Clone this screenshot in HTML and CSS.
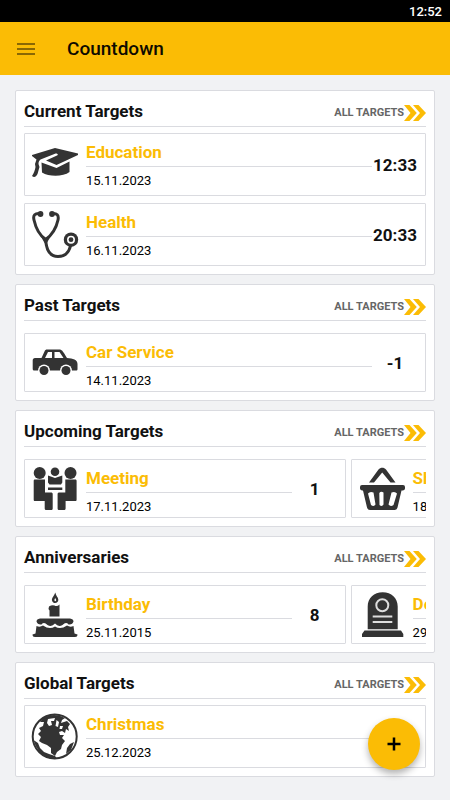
FILE: index.html
```html
<!DOCTYPE html>
<html lang="en">
<head>
<meta charset="utf-8">
<meta name="viewport" content="width=device-width, initial-scale=1">
<title>Countdown</title>
<link rel="stylesheet" href="styles.css">
</head>
<body>
<svg class="defs" aria-hidden="true">
  <symbol id="more" viewBox="0 0 22 16">
    <path d="M0 0H5.500L12.800 8L5.500 16H0L6.500 8ZM9 0H14.500L22 8L14.500 16H9L16 8Z"/>
  </symbol>
</svg>

<div class="status">12:52</div>
<header class="appbar">
  <button class="menu" type="button" aria-label="Menu">
    <svg width="18" height="14" viewBox="0 0 18 14"><path d="M0 2H18M0 7H18M0 12H18"/></svg>
  </button>
  <h1>Countdown</h1>
</header>

<main class="content">
  <section class="card">
    <div class="card-head"><h2>Current Targets</h2><a class="all" href="#current">ALL TARGETS<svg><use href="#more"/></svg></a></div>
    <div class="list" id="current">
      <article class="item">
        <svg class="icon" viewBox="0 0 48 48">
          <path d="M24 7L47 12.500V14L25.500 24L15 19.500L26 14.500C28 13.500 26 12 24 12.700L9.500 18.500C8 20 7.500 21 7.500 23L8.500 26L6.500 33C5 36 3 37 1 35C3 32 4 29 4.500 26L4 23L5.500 18.500L1 15V14Z"/>
          <path d="M10.500 21.500L25.500 27L38.500 20.500V31C32 36 18 36 11 31.500Z"/>
        </svg>
        <div class="info"><h3>Education</h3><time>15.11.2023</time></div>
        <strong class="count">12:33</strong>
      </article>
      <article class="item">
        <svg class="icon" viewBox="0 0 48 48">
          <path class="line tube" d="M9 2.500C4 2 1.800 4 3 9C5 18 8 24 14.700 28.500C21 24 25 18 27 9C28 4 26 2 21 2.500M14.700 28C15 36 17 45.500 27 45.500C34 45.500 38 41 39.500 35"/>
          <circle cx="9.500" cy="3" r="2.900"/><circle cx="21" cy="3" r="2.900"/>
          <path d="M8.500 23L14.700 34L21 23L14.700 27Z"/>
          <circle cx="40" cy="28.700" r="7.200"/><circle class="hole" cx="40" cy="28.700" r="4"/><circle cx="40" cy="28.700" r="2.400"/>
        </svg>
        <div class="info"><h3>Health</h3><time>16.11.2023</time></div>
        <strong class="count">20:33</strong>
      </article>
    </div>
  </section>

  <section class="card">
    <div class="card-head"><h2>Past Targets</h2><a class="all" href="#past">ALL TARGETS<svg><use href="#more"/></svg></a></div>
    <div class="list short" id="past">
      <article class="item">
        <svg class="icon" viewBox="0 0 48 48">
          <path d="M16 10.500H29C31 10.500 33 14 36 19C42 19.500 46.500 20.500 46.500 25V30C46.500 31 46 31.500 45 31.500H3.500C2 31.500 1.700 31 1.700 29.500V21.500C1.700 20 2.500 19 4 19H10.500L13.500 12.500C14 11 15 10.500 16 10.500Z"/>
          <path class="hole" d="M17 13H21V19H14ZM23.500 13H28.500L32.500 19H23.500Z"/>
          <circle class="hole" cx="13" cy="31.500" r="6"/><circle class="hole" cx="35" cy="31.500" r="6"/>
          <circle cx="13" cy="31.500" r="4.500"/><circle cx="35" cy="31.500" r="4.500"/>
        </svg>
        <div class="info"><h3>Car Service</h3><time>14.11.2023</time></div>
        <strong class="count">-1</strong>
      </article>
    </div>
  </section>

  <section class="card">
    <div class="card-head"><h2>Upcoming Targets</h2><a class="all" href="#upcoming">ALL TARGETS<svg><use href="#more"/></svg></a></div>
    <div class="list short carousel" id="upcoming">
      <article class="item">
        <svg class="icon" viewBox="0 0 48 48">
          <circle cx="8.700" cy="8" r="6"/><circle cx="39.500" cy="8" r="6"/><circle cx="24" cy="6.700" r="4.300"/>
          <path d="M4 14.500H14V27.500H20C21 27.500 21.700 28 21.700 29V43.500C21.700 44.500 21 45 20 45H15.500C14.500 45 13.700 44.500 13.700 43.500V36H4C3 36 2.700 35.500 2.700 34.500V16C2.700 15 3 14.500 4 14.500Z"/>
          <path d="M44.300 14.500H34.300V27.500H28.300C27.300 27.500 26.600 28 26.600 29V43.500C26.600 44.500 27.300 45 28.300 45H32.800C33.800 45 34.600 44.500 34.600 43.500V36H44.300C45.300 36 45.600 35.500 45.600 34.500V16C45.600 15 45.300 14.500 44.300 14.500Z"/>
          <path d="M17 10.500L24 13L31.300 10.500V17.500L30 19.500H18.500L17 17.500ZM17 22.500H31.300V25H17Z"/>
        </svg>
        <div class="info"><h3>Meeting</h3><time>17.11.2023</time></div>
        <strong class="count">1</strong>
      </article>
      <article class="item">
        <svg class="icon" viewBox="0 0 48 48">
          <path d="M11 17.500L20.500 4.500C22.500 2.300 26 2.300 28 4.500L37.500 17.500H32.500L24.200 7.500L16 17.500Z"/>
          <path d="M4 20H45Q47 20 47 22V23.500Q47 25 45 25.500H43.500L39.500 42.500Q39 45 36.500 45H12Q9.500 45 9 42.500L5 25.500H4Q2 25 2 23.500V22Q2 20 4 20Z"/>
          <path class="hole" d="M10 28.500Q12 26 15.500 27.500L17.500 39.500Q16 42 13 40ZM21.300 28Q23 26 25.500 27.500L25.500 39.500Q24 42 21.500 40ZM39 28.500Q37 26 33.500 27.500L30.500 39.500Q32.500 42 35.500 40Z"/>
        </svg>
        <div class="info"><h3>Shopping</h3><time>18.11.2023</time></div>
        <strong class="count">2</strong>
      </article>
    </div>
  </section>

  <section class="card">
    <div class="card-head"><h2>Anniversaries</h2><a class="all" href="#anniversaries">ALL TARGETS<svg><use href="#more"/></svg></a></div>
    <div class="list short carousel" id="anniversaries">
      <article class="item">
        <svg class="icon" viewBox="0 0 48 48">
          <path d="M24.300 1.500C23 5 20.500 7 21 9.500C21.500 11.500 23 12 24 12C26 12 27.500 10.500 27.300 8.500C27 6 25 5 24.300 1.500Z"/>
          <path class="hole" d="M24.200 7C23 9 23.300 10 24.300 10.200C25.500 9.800 25.500 9 24.200 7Z"/>
          <path d="M18 15.500Q21 13.500 23.500 14.500Q26 16 28.500 13.500V25.500H18.500V19.500L17.500 18Z"/>
          <path d="M9 27.500H39Q42.500 28 42.500 30.500Q41.500 34 37.500 33.500Q35 30.500 31.500 34Q27.500 36.500 24 32.500Q20.500 36.500 16.500 34Q13 30.500 10.500 33.500Q6.500 34 5.500 30.500Q5.500 28 9 27.500Z"/>
          <path d="M5.500 35Q9 36.500 12 34.500Q18.500 39 24 35.500Q29.500 39 36 34.500Q39 36.500 42.500 35L43.500 42.500L46.500 43.500Q46.500 46 44 46H4Q1.500 46 1.500 43.500L4.500 42.500Z"/>
        </svg>
        <div class="info"><h3>Birthday</h3><time>25.11.2015</time></div>
        <strong class="count">8</strong>
      </article>
      <article class="item">
        <svg class="icon" viewBox="0 0 48 48">
          <path d="M9.700 38.300V15.500C9.700 7 16 1.300 24.700 1.300S39.700 7 39.700 15.500V38.300ZM6.500 39.500H43L45.300 43V46H4V43Z"/>
          <circle class="engraving" cx="24.300" cy="14.300" r="6"/>
          <path class="engraving" d="M14.700 25.500H34.300M14.700 31H34.300"/>
        </svg>
        <div class="info"><h3>Death</h3><time>29.11.2010</time></div>
        <strong class="count">12</strong>
      </article>
    </div>
  </section>

  <section class="card">
    <div class="card-head"><h2>Global Targets</h2><a class="all" href="#global">ALL TARGETS<svg><use href="#more"/></svg></a></div>
    <div class="list" id="global">
      <article class="item">
        <svg class="icon" viewBox="0 0 48 48">
          <circle class="line" cx="23.700" cy="23.500" r="22"/>
          <path d="M12 5Q23 -1 34 5L31 7L30 10L33 9L36 8L39 11L37 14L38 18L35 16L34 20L31 18L28 19L29 22L33 22L31 25L34 28L31 32L30 36L26 39L24 43L20 40V35L16 32L11 30L8 28L10 24L7 21L10 18L8 15L12 13L13 9L9 9Z"/>
          <path class="hole" d="M17 6L24 5L23 8L20 8L21 12L18 13L16 10ZM25.500 7L28 9L27 14L24.500 13ZM29 13L32 13L31 16L28.500 16Z"/>
          <path d="M2.500 27L7 30L9 35L13 39L18 41L24 43L26 45.500L19 45.500Q6 41 2.500 27ZM39 31L43 29L40 37L35 41L36 35Z"/>
        </svg>
        <div class="info"><h3>Christmas</h3><time>25.12.2023</time></div>
      </article>
    </div>
  </section>
</main>

<button class="fab" type="button" aria-label="Add target">
  <svg width="14" height="14" viewBox="0 0 14 14"><path d="M7 .5V13.500M.5 7H13.500"/></svg>
</button>
</body>
</html>
```

FILE: styles.css
```css
* { box-sizing: border-box; }

body {
  margin: 0;
  min-height: 100vh;
  background: #f1f2f4;
  color: #111;
  font-family: Roboto, "Liberation Sans", sans-serif;
}

h1, h2, h3 { margin: 0; font-weight: 700; }

.defs { display: none; }

.status {
  height: 22px;
  padding-right: 8px;
  background: #000;
  color: #fff;
  font-size: 13px;
  font-weight: 500;
  line-height: 24px;
  text-align: right;
}

.appbar {
  display: flex;
  align-items: center;
  gap: 24px;
  height: 53px;
  padding: 0 9px;
  background: #fbbc05;
}

.appbar h1 { color: #0d0a00; font-size: 19px; font-weight: 500; line-height: 24px; }

.menu {
  display: flex;
  padding: 8px;
  border: 0;
  background: none;
}

.menu svg { fill: none; stroke: #8a6804; stroke-width: 2; }

.content {
  display: flex;
  flex-direction: column;
  gap: 9px;
  padding: 15px 15px 22px;
}

.card {
  padding: 0 8px 8px;
  border: 1px solid #dadbe0;
  border-radius: 2px;
  background: #fff;
}

.card-head {
  display: flex;
  align-items: center;
  justify-content: space-between;
  height: 36px;
  padding-top: 5px;
  border-bottom: 1px solid #dadbe0;
}

.card-head h2 { font-size: 17px; line-height: 20px; }

.all {
  display: flex;
  align-items: center;
  padding-top: 3px;
  color: #666;
  font-size: 11px;
  font-weight: 700;
  line-height: 16px;
  text-decoration: none;
}

.all svg { width: 22px; height: 16px; fill: #fbbc05; }

.list {
  display: flex;
  flex-direction: column;
  gap: 7px;
  padding-top: 6px;
}

.short { padding-top: 12px; }

.carousel { flex-direction: row; gap: 5px; overflow: hidden; }
.carousel .item { flex: 0 0 80%; }

.item {
  display: flex;
  align-items: center;
  height: 63px;
  padding: 0 7px 0 6px;
  border: 1px solid #dadbe0;
  border-radius: 1px;
}

.short .item { height: 59px; }

.icon { flex: none; width: 48px; height: 48px; fill: #333; }
.hole { fill: #fff; }
.line { fill: none; stroke: #333; stroke-width: 2; }
.tube { stroke-width: 3; }
.engraving { fill: none; stroke: #ddd; stroke-width: 2; }

.info { flex: 1; align-self: flex-start; margin-left: 7px; }

.info h3 {
  height: 33px;
  padding-top: 7px;
  border-bottom: 1px solid #dadbe0;
  color: #fbbc05;
  font-size: 17px;
  line-height: 22px;
}

.info time { display: block; padding-top: 6px; color: #000; font-size: 13px; line-height: 16px; }

.count { width: 46px; font-size: 17px; font-weight: 700; text-align: center; }

.fab {
  position: fixed;
  right: 30px;
  bottom: 30px;
  display: flex;
  align-items: center;
  justify-content: center;
  width: 52px;
  height: 52px;
  padding: 0;
  border: 0;
  border-radius: 50%;
  background: #fbbc05;
  box-shadow: 0 4px 7px rgba(0, 0, 0, .3);
}

.fab svg { fill: none; stroke: #000; stroke-width: 2.5; }
```
